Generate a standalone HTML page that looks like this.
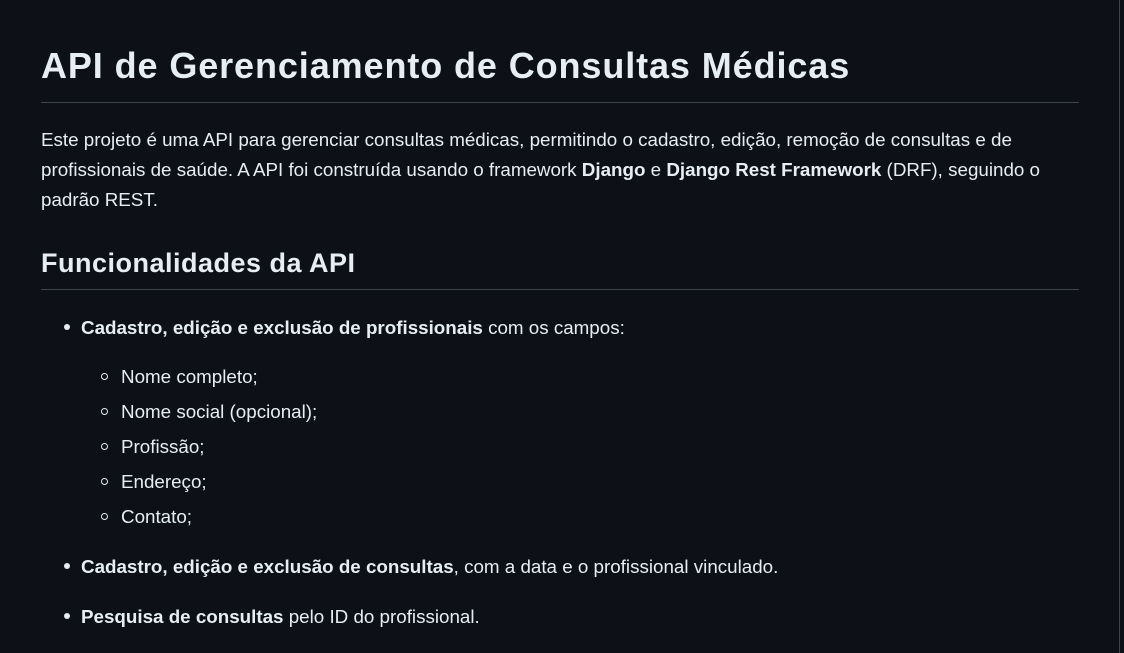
<!DOCTYPE html>
<html><head><meta charset="utf-8"><style>
html,body{margin:0;padding:0;background:#0d1117;width:1124px;height:653px;overflow:hidden}
body{font-family:"Liberation Sans",sans-serif;color:#e6edf3;position:relative}
.vb{position:absolute;left:1119px;top:0;width:1px;height:653px;background:#3d444d}
.t{position:absolute;white-space:nowrap;left:41px}
.h1{font-size:36px;top:45px;letter-spacing:0.9px;font-weight:bold}
.hr{position:absolute;left:41px;width:1038px;height:1px;background:#3d444d}
.p{font-size:18.8px;line-height:30px;top:125px}
.h2{font-size:27px;top:248px;letter-spacing:0.5px;font-weight:bold}
.li{position:absolute;white-space:nowrap;font-size:18.8px;line-height:24px}
.dot{position:absolute;width:6px;height:6px;border-radius:50%;background:#e6edf3}
.circ{position:absolute;width:5px;height:5px;border-radius:50%;border:1px solid #e6edf3}
b{font-weight:bold}
</style></head><body>
<div class="vb"></div>
<div class="t h1">API de Gerenciamento de Consultas Médicas</div>
<div class="hr" style="top:102px"></div>
<div class="t p">Este projeto é uma API para gerenciar consultas médicas, permitindo o cadastro, edição, remoção de consultas e de<br>profissionais de saúde. A API foi construída usando o framework <b>Django</b> e <b>Django Rest Framework</b> (DRF), seguindo o<br>padrão REST.</div>
<div class="t h2">Funcionalidades da API</div>
<div class="hr" style="top:289px"></div>

<div class="dot" style="left:64px;top:324px"></div>
<div class="li" style="left:81px;top:316px"><b>Cadastro, edição e exclusão de profissionais</b> com os campos:</div>

<div class="circ" style="left:101px;top:373px"></div>
<div class="li" style="left:121px;top:365px">Nome completo;</div>
<div class="circ" style="left:101px;top:408px"></div>
<div class="li" style="left:121px;top:400px">Nome social (opcional);</div>
<div class="circ" style="left:101px;top:443px"></div>
<div class="li" style="left:121px;top:435px">Profissão;</div>
<div class="circ" style="left:101px;top:478px"></div>
<div class="li" style="left:121px;top:470px">Endereço;</div>
<div class="circ" style="left:101px;top:513px"></div>
<div class="li" style="left:121px;top:505px">Contato;</div>

<div class="dot" style="left:64px;top:563px"></div>
<div class="li" style="left:81px;top:555px"><b>Cadastro, edição e exclusão de consultas</b>, com a data e o profissional vinculado.</div>
<div class="dot" style="left:64px;top:613px"></div>
<div class="li" style="left:81px;top:605px"><b>Pesquisa de consultas</b> pelo ID do profissional.</div>
</body></html>
